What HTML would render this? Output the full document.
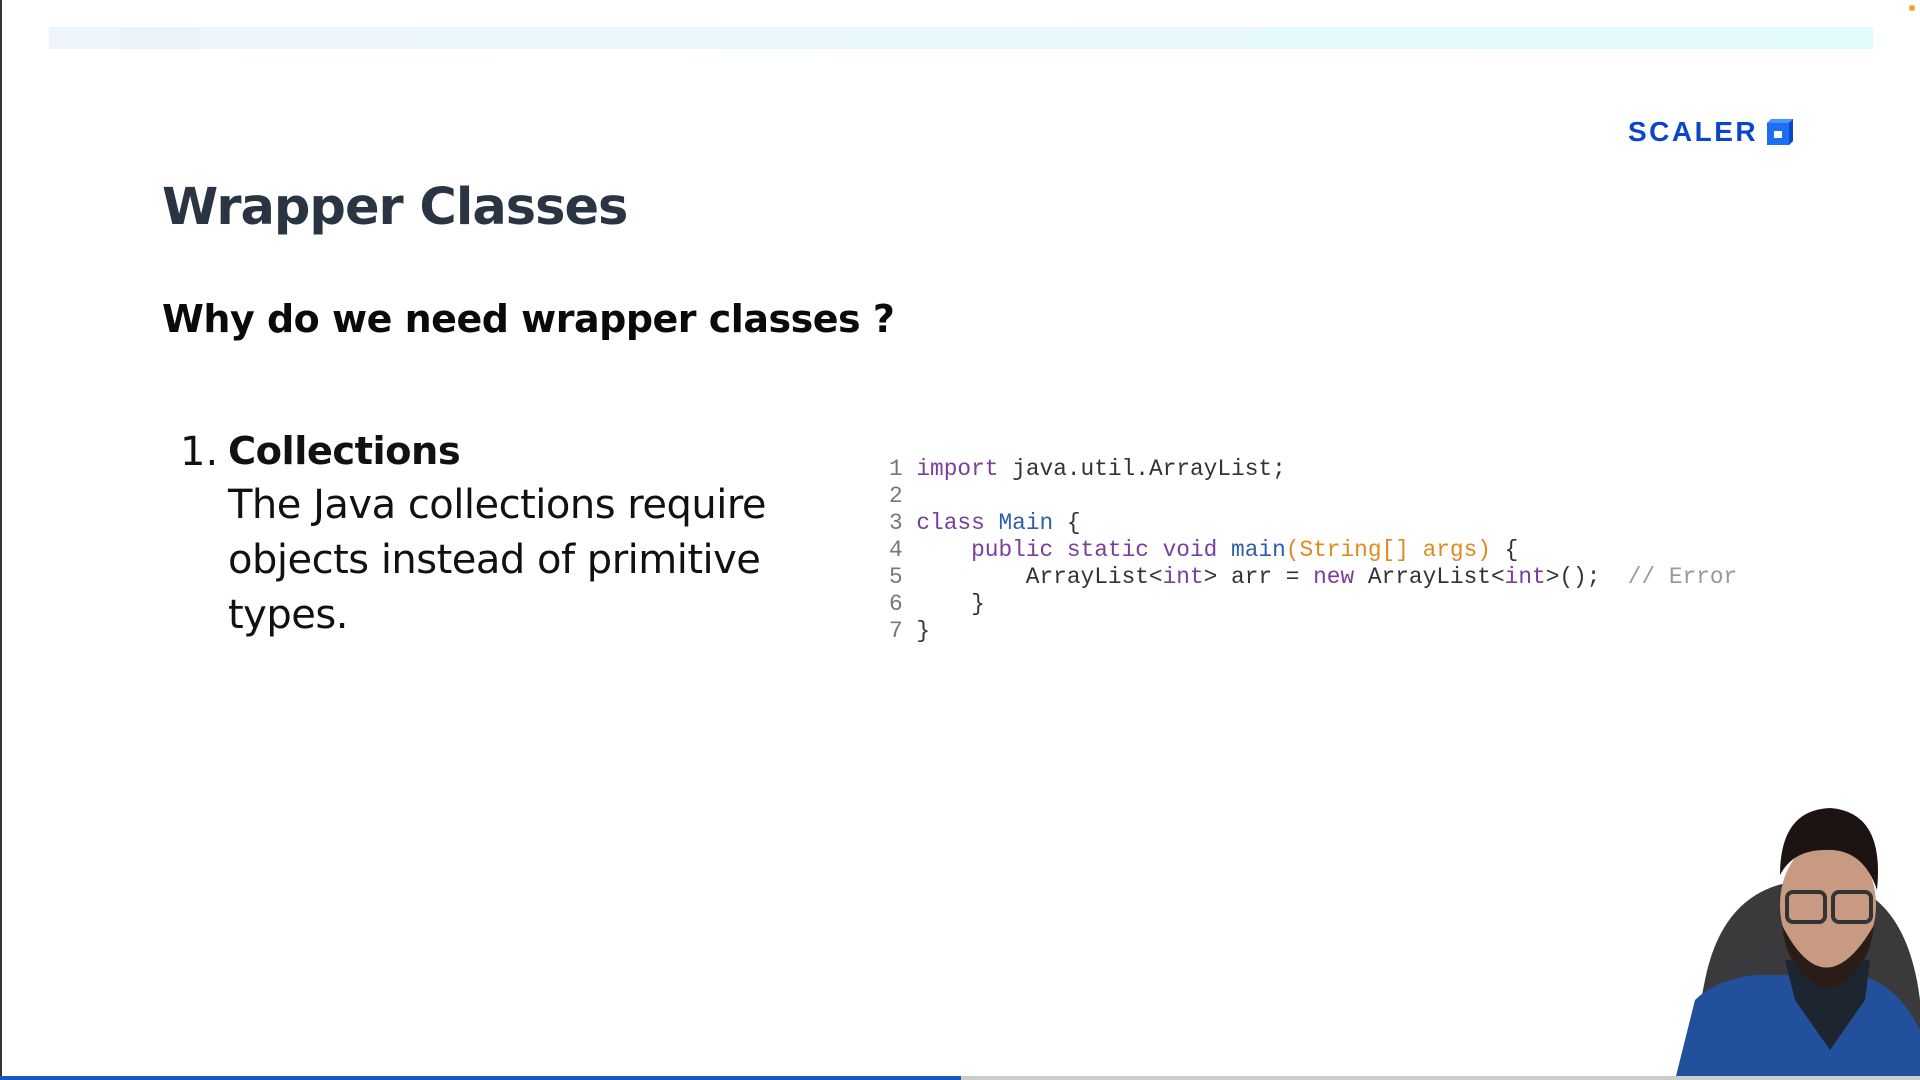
<!DOCTYPE html>
<html><head><meta charset="utf-8"><style>
html,body{margin:0;padding:0}
body{width:1920px;height:1080px;position:relative;overflow:hidden;background:#fff;font-family:"Liberation Sans",sans-serif}
.abs{position:absolute}
.topbar{left:49px;top:27px;width:1824px;height:22px;background:linear-gradient(90deg,#edf4fa,#e3fbfd)}
.logo{left:1628px;top:116px;font-weight:bold;font-size:28px;letter-spacing:2.5px;color:#0b45c9}
.title{left:162px;top:178px;font-size:51px;font-weight:bold;color:#2b3442;font-family:"DejaVu Sans",sans-serif;letter-spacing:-1px}
.sub{left:162px;top:297px;font-size:38px;font-weight:bold;color:#0a0a0a;font-family:"DejaVu Sans",sans-serif;letter-spacing:-0.5px}
.num{left:180px;top:429px;font-size:40px;color:#111;font-family:"DejaVu Sans",sans-serif}
.coll{left:228px;top:429px;font-size:38.4px;font-weight:bold;color:#111;font-family:"DejaVu Sans",sans-serif;letter-spacing:-0.5px}
.body{left:228px;top:478px;font-size:40px;line-height:55px;color:#111;font-family:"DejaVu Sans",sans-serif;letter-spacing:-0.5px}
.code{left:889px;top:456px;font-family:"Liberation Mono",monospace;font-size:22.8px;line-height:27px;color:#333;white-space:pre}
.ln{color:#777}
.k{color:#7a3e9d}.c{color:#2f5ea8}.o{color:#e08a1e}.g{color:#999}
</style></head><body>
<div class="abs" style="left:0;top:0;width:2px;height:1080px;background:#333"></div>
<div class="abs" style="left:1909px;top:5px;width:6px;height:6px;border-radius:50%;background:#f5a030"></div>
<div class="abs topbar"></div>
<div class="abs logo">SCALER</div>
<svg class="abs" style="left:1763px;top:115px" width="32" height="32" viewBox="0 0 32 32">
<polygon points="8,4 30,4 30,26 26,30 4,30 4,8" fill="#1b6ff0"/>
<polygon points="4,8 8,4 30,4 26,8" fill="#4a96ff"/>
<polygon points="26,8 30,4 30,26 26,30" fill="#0b45c9"/>
<rect x="11" y="16" width="8" height="7" fill="#fff"/>
</svg>
<div class="abs title">Wrapper Classes</div>
<div class="abs sub">Why do we need wrapper classes ?</div>
<div class="abs num">1.</div>
<div class="abs coll">Collections</div>
<div class="abs body">The Java collections require<br>objects instead of primitive<br>types.</div>
<div class="abs code"><span class="ln">1</span> <span class="k">import</span> java.util.ArrayList;
<span class="ln">2</span>
<span class="ln">3</span> <span class="k">class</span> <span class="c">Main</span> {
<span class="ln">4</span>     <span class="k">public static void</span> <span class="c">main</span><span class="o">(String[] args)</span> {
<span class="ln">5</span>         ArrayList&lt;<span class="k">int</span>&gt; arr = <span class="k">new</span> ArrayList&lt;<span class="k">int</span>&gt;();  <span class="g">// Error</span>
<span class="ln">6</span>     }
<span class="ln">7</span> }</div>
<svg class="abs" style="left:1665px;top:780px" width="255" height="300" viewBox="0 0 255 300">
<path d="M40 200 Q60 100 150 100 Q240 100 255 220 L255 300 L20 300 Z" fill="#3a3a3c"/>
<path d="M30 220 Q20 260 10 300 L255 300 L255 250 Q230 200 190 195 L90 195 Q50 200 30 220Z" fill="#22509a"/>
<path d="M120 180 L130 220 L165 270 L200 220 L205 180 Z" fill="#1d2530"/>
<ellipse cx="163" cy="125" rx="48" ry="65" fill="#c89a82"/>
<path d="M117 145 Q160 230 209 145 Q204 195 163 210 Q122 195 117 145Z" fill="#2a1d18"/>
<path d="M115 95 Q115 30 165 28 Q220 32 212 110 Q198 68 160 70 Q128 70 115 95Z" fill="#1b1412"/>
<rect x="122" y="112" width="38" height="30" rx="6" fill="none" stroke="#333" stroke-width="4"/>
<rect x="168" y="112" width="38" height="30" rx="6" fill="none" stroke="#333" stroke-width="4"/>
</svg>
<div class="abs" style="left:0;top:1076px;width:961px;height:4px;background:#1a56c4"></div>
<div class="abs" style="left:961px;top:1076px;width:959px;height:4px;background:#ccc"></div>
</body></html>
